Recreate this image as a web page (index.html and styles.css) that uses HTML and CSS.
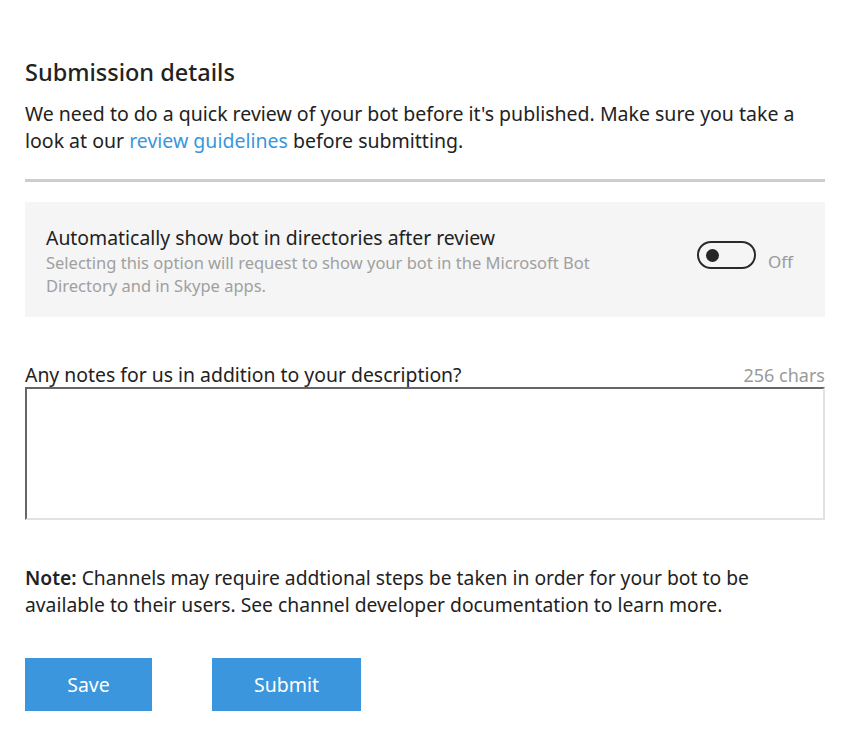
FILE: index.html
```html
<!DOCTYPE html>
<html lang="en">
<head>
<meta charset="utf-8">
<title>Submission details</title>
<link rel="stylesheet" href="styles.css">
</head>
<body>
<main class="page">
  <h1 class="title">Submission details</h1>
  <p class="intro">We need to do a quick review of your bot before it's published. Make sure you take a look at our <a class="link" href="#">review guidelines</a> before submitting.</p>
  <hr class="rule">
  <section class="option">
    <div class="option-text">
      <div class="option-title">Automatically show bot in directories after review</div>
      <div class="option-desc">Selecting this option will request to show your bot in the Microsoft Bot Directory and in Skype apps.</div>
    </div>
    <div class="toggle-wrap">
      <span class="toggle"><span class="knob"></span></span>
      <span class="toggle-label">Off</span>
    </div>
  </section>
  <div class="notes-head">
    <label class="notes-label" for="notes">Any notes for us in addition to your description?</label>
    <span class="chars">256 chars</span>
  </div>
  <textarea id="notes" class="notes"></textarea>
  <p class="note"><strong>Note:</strong> Channels may require addtional steps be taken in order for your bot to be available to their users. See channel developer documentation to learn more.</p>
  <div class="actions">
    <button class="btn">Save</button>
    <button class="btn btn-submit">Submit</button>
  </div>
</main>
</body>
</html>
```
FILE: styles.css
```css
html, body {
  margin: 0;
  padding: 0;
  background: #fff;
}
body {
  font-family: "Noto Sans", "Open Sans", sans-serif;
  color: #222;
}
.page {
  width: 800px;
  padding: 57px 0 0 25px;
}
.title {
  margin: 0;
  font-size: 23.5px;
  line-height: 30px;
  font-weight: 500;
  color: #222;
}
.intro {
  margin: 13px 0 0;
  font-size: 19.5px;
  line-height: 27px;
}
.link {
  color: #3a96dd;
  text-decoration: none;
}
.rule {
  margin: 25px 0 0;
  border: 0;
  height: 3px;
  background: #cdcdcd;
}
.option {
  margin-top: 20px;
  background: #f5f5f5;
  display: flex;
  align-items: center;
  justify-content: space-between;
  padding: 24px 32px 20px 21px;
  height: 115px;
  box-sizing: border-box;
}
.option-text {
  width: 600px;
}
.option-title {
  font-size: 19.4px;
  line-height: 24px;
  color: #222;
}
.option-desc {
  margin-top: 1px;
  font-size: 16.5px;
  line-height: 23px;
  color: #a0a0a0;
}
.toggle-wrap {
  display: flex;
  align-items: center;
  gap: 12px;
  margin-top: -6px;
}
.toggle {
  width: 59px;
  height: 28px;
  box-sizing: border-box;
  border: 2px solid #2a2a2a;
  border-radius: 14px;
  display: flex;
  align-items: center;
  padding-left: 7px;
  margin-top: -7px;
}
.knob {
  width: 13px;
  height: 13px;
  border-radius: 50%;
  background: #262626;
}
.toggle-label {
  font-size: 17px;
  color: #9a9a9a;
  margin-top: 5px;
}
.notes-head {
  margin-top: 46px;
  display: flex;
  justify-content: space-between;
  align-items: baseline;
  line-height: 23px;
}
.notes-label {
  font-size: 19.4px;
  color: #222;
}
.chars {
  font-size: 18px;
  color: #9a9a9a;
}
.notes {
  display: block;
  width: 800px;
  height: 133px;
  box-sizing: border-box;
  margin: 0;
  border-style: solid;
  border-width: 2px;
  border-color: #666 #e2e2e2 #e2e2e2 #666;
  resize: none;
  background: #fff;
}
.note {
  margin: 44px 0 0;
  font-size: 19.3px;
  line-height: 27px;
  color: #222;
}
.note strong {
  font-weight: 600;
}
.actions {
  margin-top: 40px;
  display: flex;
  gap: 60px;
}
.btn {
  width: 127px;
  height: 53px;
  border: 0;
  background: #3b96dd;
  color: #fff;
  font-family: inherit;
  font-size: 19.5px;
  padding: 0;
}
.btn-submit {
  width: 149px;
}
```
